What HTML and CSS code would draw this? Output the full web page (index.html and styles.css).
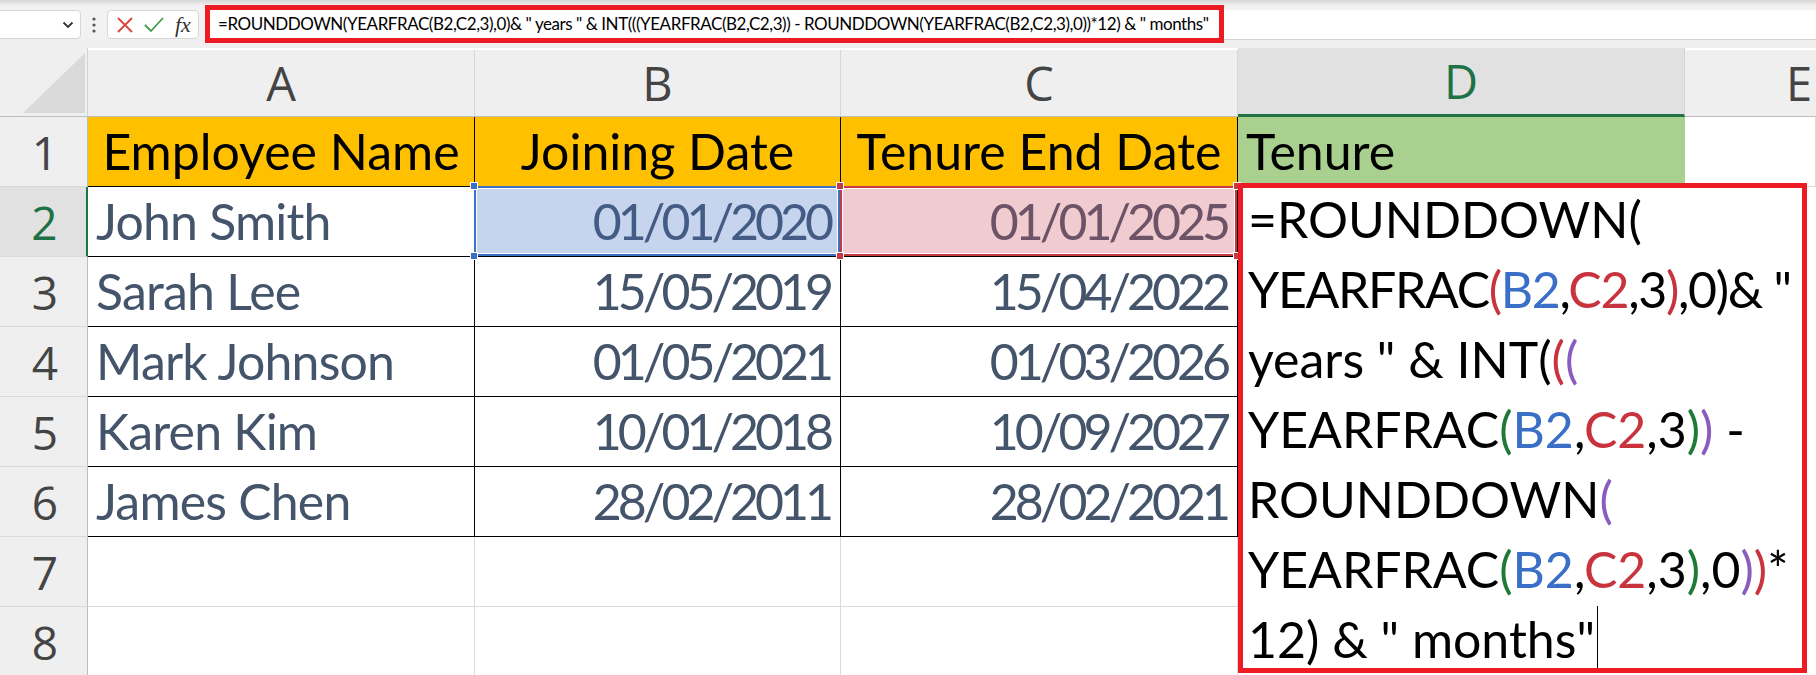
FILE: index.html
```html
<!DOCTYPE html>
<html lang="en">
<head>
    <meta charset="UTF-8">
    <title>Tenure formula</title>
    <link rel="stylesheet" href="styles.css">
</head>
<body>
    <div class="formula-bar">
        <div class="name-box">
            <svg class="chevron" width="12" height="8" viewBox="0 0 12 8"><polyline points="1.5,1.5 6,6 10.5,1.5" fill="none" stroke="#333" stroke-width="1.8"/></svg>
        </div>
        <svg class="dots" width="6" height="18" viewBox="0 0 6 18"><circle cx="3" cy="3" r="1.6" fill="#555"/><circle cx="3" cy="9" r="1.6" fill="#555"/><circle cx="3" cy="15" r="1.6" fill="#555"/></svg>
        <div class="fx-buttons">
            <svg width="18" height="18" viewBox="0 0 18 18"><path d="M2 2 L16 16 M16 2 L2 16" stroke="#e0413c" stroke-width="1.8" fill="none"/></svg>
            <svg width="22" height="18" viewBox="0 0 22 18"><polyline points="2,9 8,15 20,2" stroke="#3f9e4c" stroke-width="1.8" fill="none"/></svg>
            <span class="fx">fx</span>
        </div>
        <div class="formula-input">
            <span class="formula-text">=ROUNDDOWN(YEARFRAC(B2,C2,3),0)&amp; " years " &amp; INT(((YEARFRAC(B2,C2,3)) - ROUNDDOWN(YEARFRAC(B2,C2,3),0))*12) &amp; " months"</span>
        </div>
    </div>

    <div class="sheet">
        <div class="corner"></div>
        <div class="col-head">A</div>
        <div class="col-head">B</div>
        <div class="col-head">C</div>
        <div class="col-head active">D</div>
        <div class="col-head last">E</div>

        <div class="row-head">1</div>
        <div class="cell tbl hdr">Employee Name</div>
        <div class="cell tbl hdr">Joining Date</div>
        <div class="cell tbl hdr">Tenure End Date</div>
        <div class="cell tenure">Tenure</div>
        <div class="cell"></div>

        <div class="row-head active">2</div>
        <div class="cell tbl name">John Smith</div>
        <div class="cell tbl date ref ref-b">01/01/2020
            <span class="handle tl"></span><span class="handle tr"></span><span class="handle bl"></span><span class="handle br"></span>
        </div>
        <div class="cell tbl date ref ref-c">01/01/2025
            <span class="handle tl"></span><span class="handle tr"></span><span class="handle bl"></span><span class="handle br"></span>
        </div>
        <div class="editor">
            <div class="edit-lines">
                <div>=ROUNDDOWN(</div>
                <div class="tight">YEARFRAC<span class="red">(</span><span class="blue">B2</span>,<span class="red">C2</span>,3<span class="red">)</span>,0)&amp; "</div>
                <div>years " &amp; INT(<span class="red">(</span><span class="purple">(</span></div>
                <div>YEARFRAC<span class="green">(</span><span class="blue">B2</span>,<span class="red">C2</span>,3<span class="green">)</span><span class="purple">)</span> -</div>
                <div>ROUNDDOWN<span class="purple">(</span></div>
                <div>YEARFRAC<span class="green">(</span><span class="blue">B2</span>,<span class="red">C2</span>,3<span class="green">)</span>,0<span class="purple">)</span><span class="red">)</span>*</div>
                <div>12) &amp; " months"<span class="caret"></span></div>
            </div>
        </div>

        <div class="row-head">3</div>
        <div class="cell tbl name">Sarah Lee</div>
        <div class="cell tbl date">15/05/2019</div>
        <div class="cell tbl date">15/04/2022</div>

        <div class="row-head">4</div>
        <div class="cell tbl name">Mark Johnson</div>
        <div class="cell tbl date">01/05/2021</div>
        <div class="cell tbl date">01/03/2026</div>

        <div class="row-head">5</div>
        <div class="cell tbl name">Karen Kim</div>
        <div class="cell tbl date">10/01/2018</div>
        <div class="cell tbl date">10/09/2027</div>

        <div class="row-head">6</div>
        <div class="cell tbl name">James Chen</div>
        <div class="cell tbl date">28/02/2011</div>
        <div class="cell tbl date">28/02/2021</div>

        <div class="row-head">7</div>
        <div class="cell"></div>
        <div class="cell"></div>
        <div class="cell"></div>

        <div class="row-head">8</div>
        <div class="cell"></div>
        <div class="cell"></div>
        <div class="cell"></div>
    </div>
</body>
</html>
```

FILE: styles.css
```css
body {
    margin: 0;
    width: 1816px;
    height: 675px;
    overflow: hidden;
    background: #efefef;
    font-family: Lato, "Liberation Sans", sans-serif;
}

/* formula bar */
.formula-bar {
    height: 48px;
    box-sizing: border-box;
    padding-top: 10px;
    display: flex;
    align-items: flex-start;
    background: linear-gradient(#d6d6d6, #f2f2f2 6px, #f2f2f2 38px, #efefef 40px);
}
.name-box {
    width: 90px;
    height: 29px;
    margin-left: -9px;
    box-sizing: border-box;
    background: #fff;
    border: 1px solid #d6d6d6;
    border-radius: 4px;
    display: flex;
    align-items: center;
    justify-content: flex-end;
    padding-right: 6px;
}
.dots {
    margin: 6px 0 0 10px;
}
.fx-buttons {
    margin-left: 10px;
    width: 92px;
    height: 29px;
    box-sizing: border-box;
    background: #fff;
    border: 1px solid #d6d6d6;
    border-radius: 4px;
    display: flex;
    align-items: center;
    gap: 9px;
    padding-left: 8px;
}
.fx {
    font-family: "Liberation Serif", serif;
    font-style: italic;
    font-size: 22px;
    line-height: 22px;
    color: #333;
    margin-left: 1px;
}
.formula-input {
    flex: 1;
    margin-left: 7px;
    height: 29px;
    background: #fff;
    border-bottom: 1px solid #d4d4d4;
}
.formula-text {
    display: inline-block;
    box-sizing: border-box;
    width: 1009px;
    height: 28px;
    margin-left: 4px;
    padding-left: 8px;
    outline: 5px solid #ed1c24;
    font-size: 17px;
    letter-spacing: -0.45px;
    line-height: 28px;
    color: #000;
    white-space: nowrap;
}

/* sheet grid */
.sheet {
    display: grid;
    grid-template-columns: 88px 387px 366px 397px 447px 1fr;
    grid-template-rows: 69px repeat(8, 70px);
    background: #fff;
}
.corner {
    background: #efefef;
    border-right: 1px solid #d4d4d4;
    border-bottom: 1px solid #bdbdbd;
    position: relative;
}
.corner::after {
    content: '';
    position: absolute;
    left: 23px;
    top: 5px;
    width: 62px;
    height: 60px;
    background: #dadada;
    clip-path: polygon(100% 0, 100% 100%, 0 100%);
}
.col-head {
    background: #efefef;
    border-right: 1px solid #d6d6d6;
    border-bottom: 1px solid #bdbdbd;
    font-family: "Open Sans", sans-serif;
    font-size: 47px;
    color: #444;
    display: flex;
    align-items: center;
    justify-content: center;
    box-sizing: border-box;
    margin-top: 2px;
}
.col-head.active {
    background: #e1e1e1;
    color: #1e7145;
    border-bottom: 3px solid #217346;
    margin-top: 0;
}
.col-head.last {
    justify-content: flex-start;
    padding-left: 101px;
    border-right: none;
}
.row-head {
    background: #efefef;
    border-right: 1px solid #bdbdbd;
    border-bottom: 1px solid #dadada;
    font-family: "Open Sans", sans-serif;
    font-size: 46px;
    color: #444;
    display: flex;
    align-items: center;
    justify-content: center;
    padding-left: 3px;
}
.row-head.active {
    background: #e1e1e1;
    color: #1e7145;
    border-right: 2px solid #217346;
}

.cell {
    box-sizing: border-box;
    border-right: 1px solid #dadada;
    border-bottom: 1px solid #dadada;
    font-size: 50px;
    line-height: 69px;
    color: #44546a;
    white-space: nowrap;
    overflow: hidden;
}
.tbl {
    border-color: #000;
}
.hdr {
    background: #ffc000;
    color: #000;
    text-align: center;
}
.tenure {
    background: #a9d08e;
    color: #000;
    padding-left: 8px;
    border-bottom-color: #a9d08e;
    border-right: none;
}
.name {
    padding-left: 8px;
    letter-spacing: -0.8px;
}
.date {
    text-align: right;
    padding-right: 10px;
    letter-spacing: -4px;
}

/* reference highlights */
.ref {
    position: relative;
    overflow: visible;
}
.ref::after {
    content: '';
    position: absolute;
    left: -1px;
    top: -1px;
    right: 0;
    bottom: 0;
    border: 2px solid;
    box-shadow: inset 0 0 0 1px #fff;
}
.ref-b::after {
    border-color: #3b6fc6;
    background: rgba(68, 114, 196, 0.3);
}
.ref-c::after {
    border-color: #c43942;
    background: rgba(205, 82, 95, 0.3);
}
.handle {
    position: absolute;
    width: 6px;
    height: 6px;
    border: 1px solid #fff;
    z-index: 2;
}
.ref-b .handle { background: #3b6fc6; }
.ref-c .handle { background: #c43942; }
.handle.tl { left: -5px; top: -5px; }
.handle.tr { right: -4px; top: -5px; }
.handle.bl { left: -5px; bottom: -4px; }
.handle.br { right: -4px; bottom: -4px; }

/* in-cell editor */
.editor {
    grid-column: 5 / 7;
    grid-row: 3 / 10;
    justify-self: start;
    align-self: start;
    width: 569px;
    height: 490px;
    margin-top: -4px;
    box-sizing: border-box;
    border: 5px solid #ed1c24;
    background: #fff;
    z-index: 3;
    overflow: hidden;
}
.edit-lines {
    margin-top: -4px;
    padding-left: 5px;
    font-size: 50px;
    line-height: 70px;
    color: #000;
    white-space: nowrap;
}
.edit-lines .tight {
    letter-spacing: -1.3px;
}
.caret {
    display: inline-block;
    width: 1px;
    height: 66px;
    background: #000;
    vertical-align: -14px;
    margin-left: 2px;
}
.red { color: #c8333d; }
.blue { color: #3a6fc8; }
.green { color: #1e7a36; }
.purple { color: #8a5cc0; }
```
